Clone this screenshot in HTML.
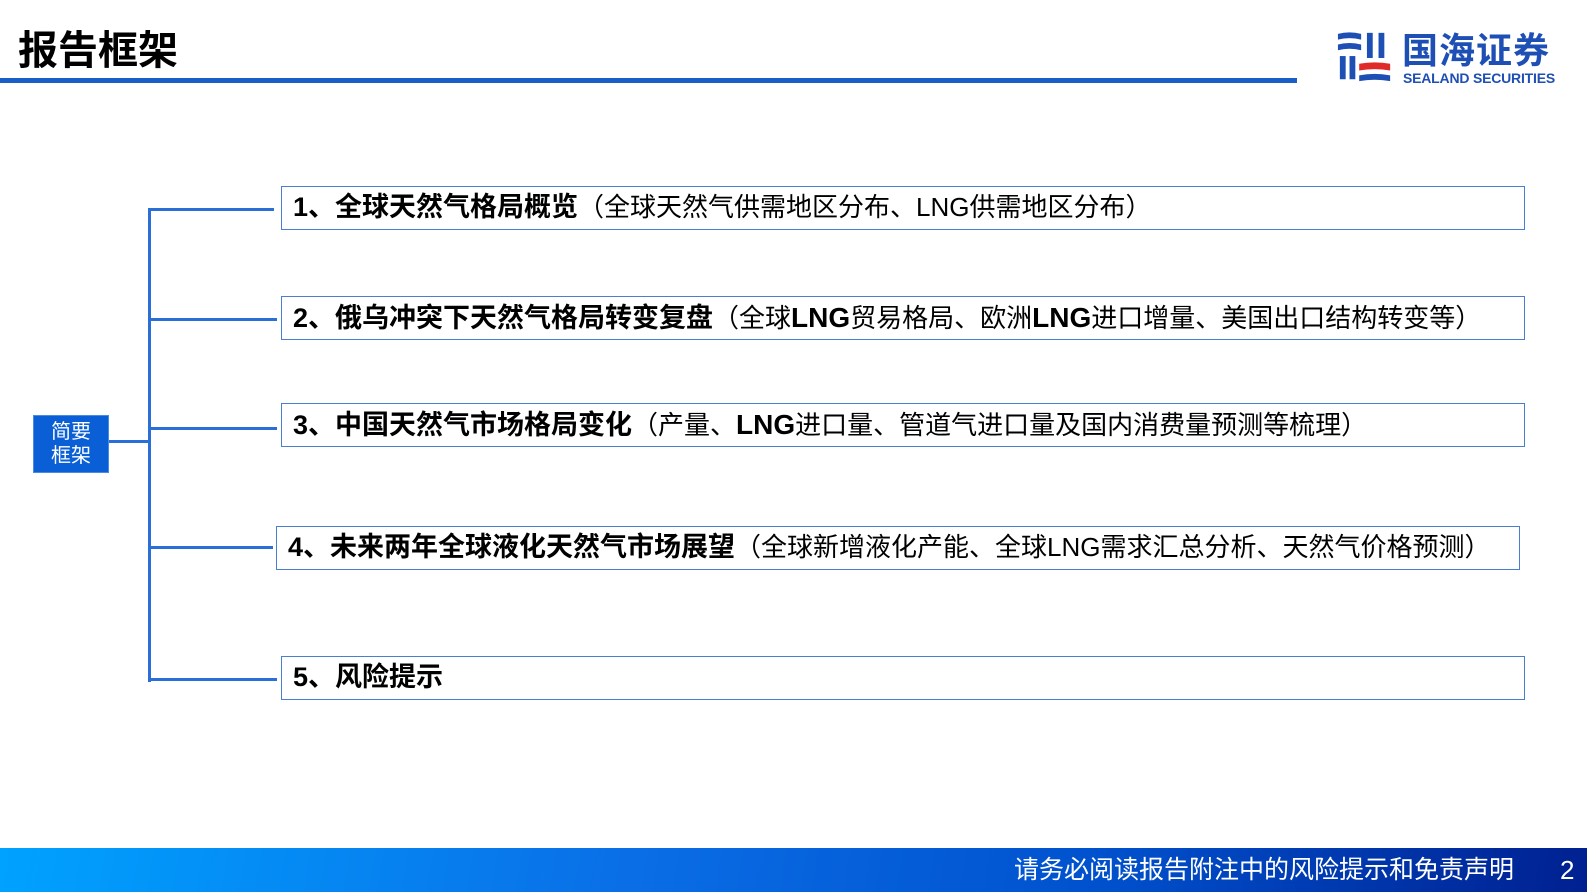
<!DOCTYPE html>
<html><head><meta charset="utf-8"><style>
*{margin:0;padding:0;box-sizing:border-box}
body{width:1587px;height:892px;position:relative;background:#fff;overflow:hidden;font-family:"Liberation Sans","Noto Sans CJK SC",sans-serif;color:#000}
.a{position:absolute}
.ln{position:absolute;background:#2a6fd6}
.box{position:absolute;border:1.5px solid #4a7fd0;height:44px;width:1244px;padding-left:11px;line-height:41px;font-size:27px;white-space:nowrap}
.box b{font-weight:bold}
.box span{font-weight:normal;font-size:26px}
</style></head><body>
<div class="a" style="left:18px;top:28px;font-size:40px;font-weight:bold;line-height:46px">报告框架</div>
<div class="a" style="left:0;top:78px;width:1297px;height:5px;background:#1a5fc8"></div>
<svg class="a" style="left:1336px;top:30px" width="58" height="55" viewBox="0 0 60 55">
<g fill="#1e4fb4">
<path d="M2 3 Q14 0 26 3 L26 9 Q14 6 2 9Z"/>
<path d="M2 14 Q14 11 26 14 L26 20 Q14 17 2 20Z"/>
<path d="M4 26 L10 26 L10 50 L4 50Z"/>
<path d="M14 26 L20 26 L20 50 L14 50Z"/>
<path d="M32 2 L38 2 L38 28 L32 28Z"/>
<path d="M44 2 L50 2 L50 28 L44 28Z"/>
<path d="M24 46 Q40 43 56 46 L56 52 Q40 49 24 52Z"/>
</g>
<path d="M24 34 Q40 31 56 34 L56 41 Q40 38 24 41Z" fill="#e02a2a"/>
</svg>
<div class="a" style="left:1402px;top:30px;font-size:36px;font-weight:bold;color:#1e4fb4;letter-spacing:1px;line-height:42px">国海证券</div>
<div class="a" style="left:1403px;top:70px;font-size:14px;font-weight:bold;color:#1e4fb4;line-height:16px;letter-spacing:-0.2px">SEALAND SECURITIES</div>

<div class="a" style="left:33px;top:415px;width:76px;height:58px;background:#0a5fd6;border:1px solid #4a8ae0;color:#fff;font-size:20px;line-height:24px;text-align:center;padding-top:4px">简要<br>框架</div>
<div class="ln" style="left:109px;top:440px;width:41px;height:3px"></div>
<div class="ln" style="left:148px;top:208px;width:3px;height:474px"></div>
<div class="ln" style="left:148px;top:208px;width:126px;height:3px"></div>
<div class="ln" style="left:151px;top:318px;width:126px;height:3px"></div>
<div class="ln" style="left:151px;top:427px;width:126px;height:3px"></div>
<div class="ln" style="left:151px;top:546px;width:122px;height:3px"></div>
<div class="ln" style="left:148px;top:678px;width:129px;height:3px"></div>

<div class="box" style="left:281px;top:186px"><b>1、全球天然气格局概览</b><span>（全球天然气供需地区分布、LNG供需地区分布）</span></div>
<div class="box" style="left:281px;top:296px"><b>2、俄乌冲突下天然气格局转变复盘</b><span>（全球<b style="font-size:28px">LNG</b>贸易格局、欧洲<b style="font-size:28px">LNG</b>进口增量、美国出口结构转变等）</span></div>
<div class="box" style="left:281px;top:403px"><b>3、中国天然气市场格局变化</b><span>（产量、<b style="font-size:28px">LNG</b>进口量、管道气进口量及国内消费量预测等梳理）</span></div>
<div class="box" style="left:276px;top:526px"><b>4、未来两年全球液化天然气市场展望</b><span>（全球新增液化产能、全球LNG需求汇总分析、天然气价格预测）</span></div>
<div class="box" style="left:281px;top:656px"><b>5、风险提示</b></div>

<div class="a" style="left:0;top:848px;width:1587px;height:44px;background:linear-gradient(100deg,#00a2ff 0%,#0a6ee6 40%,#0050cc 70%,#002090 100%)"></div>
<div class="a" style="left:1014px;top:848px;line-height:44px;font-size:25px;color:#fff;white-space:nowrap">请务必阅读报告附注中的风险提示和免责声明</div>
<div class="a" style="left:1560px;top:848px;line-height:44px;font-size:26px;color:#fff">2</div>
</body></html>
